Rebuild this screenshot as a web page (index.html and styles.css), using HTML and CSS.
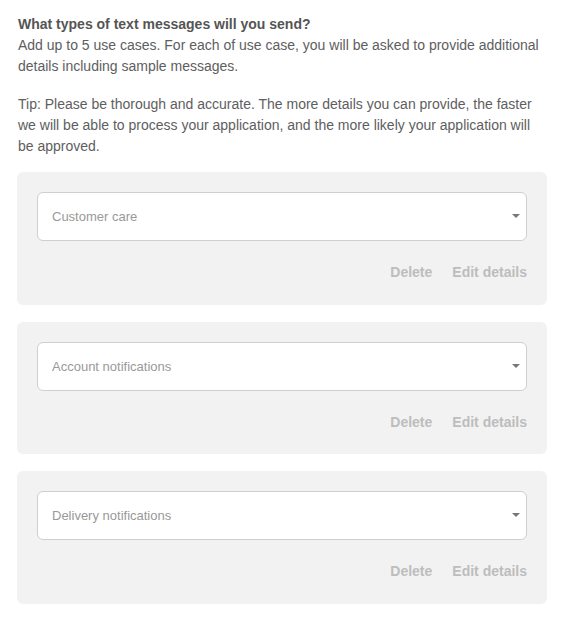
FILE: index.html
```html
<!DOCTYPE html>
<html>
<head>
<meta charset="utf-8">
<link rel="stylesheet" href="styles.css">
</head>
<body>
<div class="page">
  <div class="intro">
    <div class="title">What types of text messages will you send?</div>
    <p class="desc">Add up to 5 use cases. For each of use case, you will be asked to provide additional details including sample messages.</p>
    <p class="tip">Tip: Please be thorough and accurate. The more details you can provide, the faster we will be able to process your application, and the more likely your application will be approved.</p>
  </div>
  <div class="cards">
    <div class="card">
      <div class="select"><span>Customer care</span><span class="arrow"></span></div>
      <div class="actions"><span class="action">Delete</span><span class="action">Edit details</span></div>
    </div>
    <div class="card">
      <div class="select"><span>Account notifications</span><span class="arrow"></span></div>
      <div class="actions"><span class="action">Delete</span><span class="action">Edit details</span></div>
    </div>
    <div class="card">
      <div class="select"><span>Delivery notifications</span><span class="arrow"></span></div>
      <div class="actions"><span class="action">Delete</span><span class="action">Edit details</span></div>
    </div>
  </div>
</div>
</body>
</html>
```
FILE: styles.css
```css
html, body {
  margin: 0;
  padding: 0;
  background: #fff;
}
body {
  font-family: "Liberation Sans", Arial, sans-serif;
  font-size: 14px;
  line-height: 21px;
  color: #5e5e5e;
}
.page {
  padding: 14px 19px 0 17px;
}
.intro {
  padding-left: 1px;
}
.title {
  font-weight: bold;
  color: #555;
}
.desc {
  margin: 0;
}
.tip {
  margin: 17px 0 0 0;
}
.cards {
  margin-top: 15px;
  display: flex;
  flex-direction: column;
  gap: 17px;
}
.card {
  background: #f2f2f2;
  border-radius: 6px;
  padding: 20px 20px 21.5px 20px;
}
.select {
  height: 47px;
  background: #fff;
  border: 1px solid #cfcfcf;
  border-radius: 6px;
  display: flex;
  align-items: center;
  justify-content: space-between;
  padding: 0 6px 0 14px;
  font-size: 13px;
  color: #999;
}
.arrow {
  width: 0;
  height: 0;
  margin-top: -1px;
  border-left: 4px solid transparent;
  border-right: 4px solid transparent;
  border-top: 4px solid #777;
}
.actions {
  margin-top: 20px;
  display: flex;
  justify-content: flex-end;
  gap: 20px;
  line-height: 22px;
  font-weight: bold;
  color: #bdbdbd;
}
```
